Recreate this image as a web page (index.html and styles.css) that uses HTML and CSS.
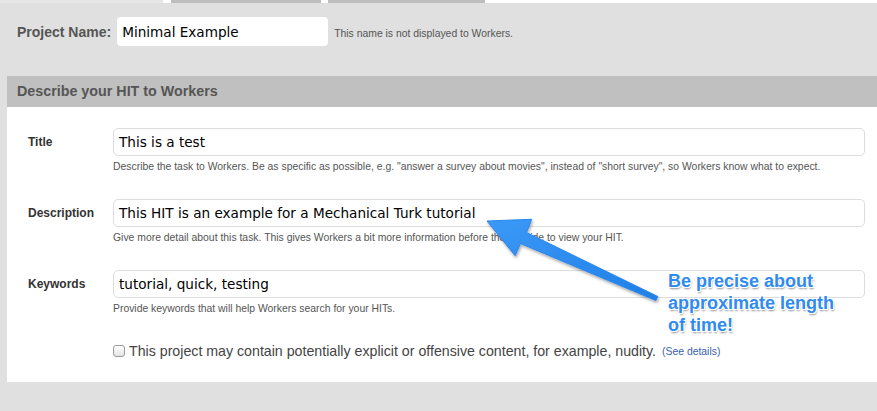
FILE: index.html
```html
<!DOCTYPE html>
<html>
<head>
<meta charset="utf-8">
<link rel="stylesheet" href="styles.css">
</head>
<body>
<div class="tabs">
  <div class="tab tab-active"></div>
  <div class="tab tab-2"></div>
  <div class="tab tab-3"></div>
</div>
<div class="main">
  <div class="project-row">
    <span class="project-label">Project Name:</span>
    <div class="project-input">Minimal Example</div>
    <span class="project-hint">This name is not displayed to Workers.</span>
  </div>
  <div class="panel">
    <div class="panel-header">Describe your HIT to Workers</div>
    <div class="panel-body">
      <div class="field">
        <div class="field-label">Title</div>
        <div class="field-control">
          <div class="text-input">This is a test</div>
          <div class="hint">Describe the task to Workers. Be as specific as possible, e.g. "answer a survey about movies", instead of "short survey", so Workers know what to expect.</div>
        </div>
      </div>
      <div class="field">
        <div class="field-label">Description</div>
        <div class="field-control">
          <div class="text-input">This HIT is an example for a Mechanical Turk tutorial</div>
          <div class="hint">Give more detail about this task. This gives Workers a bit more information before they decide to view your HIT.</div>
        </div>
      </div>
      <div class="field">
        <div class="field-label">Keywords</div>
        <div class="field-control">
          <div class="text-input">tutorial, quick, testing</div>
          <div class="hint">Provide keywords that will help Workers search for your HITs.</div>
        </div>
      </div>
      <div class="check-row">
        <span class="checkbox"></span>
        <span class="check-text">This project may contain potentially explicit or offensive content, for example, nudity.</span>
        <a class="details">(See details)</a>
      </div>
    </div>
  </div>
</div>
<svg class="annot-arrow" width="877" height="411" viewBox="0 0 877 411">
  <defs>
    <linearGradient id="ag" x1="0" y1="0" x2="1" y2="1">
      <stop offset="0" stop-color="#3b99f7"/>
      <stop offset="1" stop-color="#1f7fe6"/>
    </linearGradient>
    <filter id="sh" x="-20%" y="-20%" width="140%" height="140%">
      <feDropShadow dx="1" dy="2" stdDeviation="1.5" flood-color="#000" flood-opacity="0.35"/>
    </filter>
  </defs>
  <polygon filter="url(#sh)" fill="url(#ag)" stroke="#2a86ee" stroke-width="1" stroke-linejoin="round"
    points="487,221 531.7,219.3 526.5,232.5 657.8,296.5 655.8,300.5 520.5,243.5 515.1,255.7"/>
</svg>
<div class="callout">Be precise about<br>approximate length<br>of time!</div>
</body>
</html>
```
FILE: styles.css
```css
html, body {
  margin: 0;
  padding: 0;
  background: #ffffff;
  width: 877px;
  height: 411px;
  overflow: hidden;
  font-family: "Liberation Sans", Arial, sans-serif;
}

.tabs {
  display: flex;
  height: 3px;
  background: #ffffff;
}
.tab { height: 3px; }
.tab-active { width: 163px; background: #e6e6e6; }
.tab-2 { width: 150px; margin-left: 8px; background: #bdbdbd; }
.tab-3 { width: 157px; margin-left: 7px; background: #bdbdbd; }

.main {
  background: #e0e0e0;
  height: 408px;
  padding-top: 14px;
  box-sizing: border-box;
}

.project-row {
  display: flex;
  align-items: center;
  padding-left: 17px;
  height: 29px;
}
.project-label {
  font-weight: bold;
  font-size: 14px;
  color: #555555;
}
.project-input {
  margin-left: 6px;
  width: 206px;
  height: 29px;
  padding-left: 5px;
  background: #ffffff;
  border-radius: 4px;
  font-family: "DejaVu Sans", sans-serif;
  font-size: 13.6px;
  line-height: 30px;
  color: #000;
}
.project-hint {
  margin-left: 6px;
  font-size: 10.4px;
  color: #555555;
  padding-top: 4px;
}

.panel {
  margin-top: 30px;
  margin-left: 7px;
}
.panel-header {
  height: 31px;
  background: #c0c0c0;
  padding-left: 10px;
  font-weight: bold;
  font-size: 14.3px;
  line-height: 31px;
  color: #555555;
}
.panel-body {
  background: #ffffff;
  height: 275px;
  box-sizing: border-box;
  padding: 21px 12px 0 21px;
}

.field {
  display: flex;
  height: 71px;
}
.field-label {
  width: 85px;
  flex: none;
  font-weight: bold;
  font-size: 12px;
  line-height: 29px;
  color: #333333;
}
.field-control {
  flex: 1;
}
.text-input {
  height: 28px;
  box-sizing: border-box;
  border: 1px solid #dddddd;
  border-radius: 5px;
  padding-left: 5px;
  font-family: "DejaVu Sans", sans-serif;
  font-size: 13.6px;
  line-height: 27px;
  color: #000;
}
.hint {
  margin-top: 5px;
  font-size: 10.4px;
  line-height: 12px;
  color: #555555;
}

.check-row {
  display: flex;
  align-items: center;
  margin-left: 85px;
  margin-top: 3px;
  height: 14px;
}
.checkbox {
  width: 10px;
  height: 10px;
  border: 1px solid #9a9a9a;
  border-radius: 3px;
  background: linear-gradient(#ffffff, #e4e4e4);
  flex: none;
}
.check-text {
  margin-left: 4px;
  font-size: 14.2px;
  color: #444444;
}
.details {
  margin-left: 6px;
  font-size: 10.4px;
  color: #3a5fa8;
}

.annot-arrow {
  position: absolute;
  left: 0;
  top: 0;
  pointer-events: none;
}
.callout {
  position: absolute;
  left: 668px;
  top: 270px;
  font-family: "Liberation Sans", Arial, sans-serif;
  font-weight: bold;
  font-size: 18px;
  line-height: 22px;
  color: #2f8bf0;
  text-shadow:
    -1px -1px 0 #fff, 1px -1px 0 #fff, -1px 1px 0 #fff, 1px 1px 0 #fff,
    0 -1px 0 #fff, 0 1px 0 #fff, -1px 0 0 #fff, 1px 0 0 #fff,
    1px 2px 2px rgba(0,0,0,0.45);
}
```
